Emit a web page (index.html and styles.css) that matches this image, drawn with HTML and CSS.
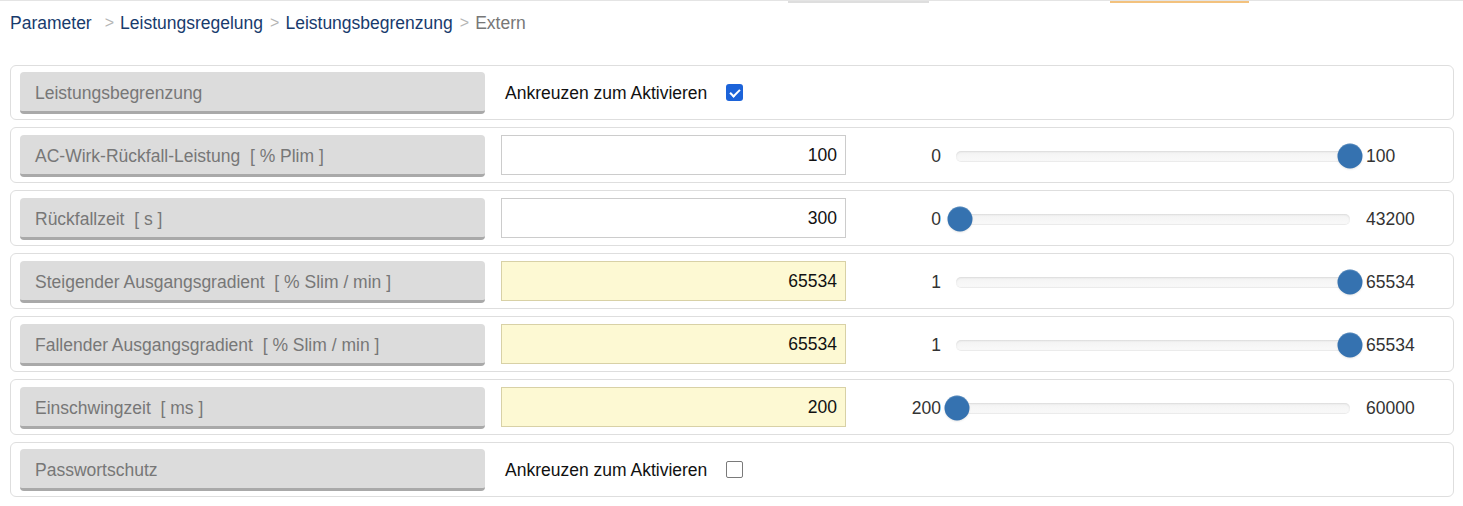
FILE: index.html
```html
<!DOCTYPE html>
<html lang="de">
<head>
<meta charset="utf-8">
<title>Extern</title>
<link rel="stylesheet" href="styles.css">
</head>
<body>
<div class="topbar">
  <span class="tb-gap1"></span><span class="tb-gray"></span><span class="tb-gap2"></span><span class="tb-orange"></span><span class="tb-rest"></span>
</div>
<nav class="crumbs">
  <a class="crumb first">Parameter</a><span class="sep">&gt;</span><a class="crumb">Leistungsregelung</a><span class="sep">&gt;</span><a class="crumb">Leistungsbegrenzung</a><span class="sep">&gt;</span><span class="crumb current">Extern</span>
</nav>
<main class="rows">
  <div class="row row-check">
    <div class="label">Leistungsbegrenzung</div>
    <label class="check"><span>Ankreuzen zum Aktivieren</span><input type="checkbox" class="box" checked></label>
  </div>
  <div class="row">
    <div class="label">AC-Wirk-Rückfall-Leistung&nbsp; [ % Plim ]</div>
    <input class="value" type="text" value="100">
    <div class="slider"><span class="min">0</span><div class="track"><div class="rail"><span class="thumb" style="left:100%"></span></div></div><span class="max">100</span></div>
  </div>
  <div class="row">
    <div class="label">Rückfallzeit&nbsp; [ s ]</div>
    <input class="value" type="text" value="300">
    <div class="slider"><span class="min">0</span><div class="track"><div class="rail"><span class="thumb" style="left:0.69%"></span></div></div><span class="max">43200</span></div>
  </div>
  <div class="row">
    <div class="label">Steigender Ausgangsgradient&nbsp; [ % Slim / min ]</div>
    <input class="value changed" type="text" value="65534">
    <div class="slider"><span class="min">1</span><div class="track"><div class="rail"><span class="thumb" style="left:100%"></span></div></div><span class="max">65534</span></div>
  </div>
  <div class="row">
    <div class="label">Fallender Ausgangsgradient&nbsp; [ % Slim / min ]</div>
    <input class="value changed" type="text" value="65534">
    <div class="slider"><span class="min">1</span><div class="track"><div class="rail"><span class="thumb" style="left:100%"></span></div></div><span class="max">65534</span></div>
  </div>
  <div class="row">
    <div class="label">Einschwingzeit&nbsp; [ ms ]</div>
    <input class="value changed" type="text" value="200">
    <div class="slider"><span class="min">200</span><div class="track"><div class="rail"><span class="thumb" style="left:0%"></span></div></div><span class="max">60000</span></div>
  </div>
  <div class="row row-check">
    <div class="label">Passwortschutz</div>
    <label class="check"><span>Ankreuzen zum Aktivieren</span><input type="checkbox" class="box"></label>
  </div>
</main>
</body>
</html>
```

FILE: styles.css
```css
* { box-sizing: border-box; }

html, body {
  margin: 0;
  padding: 0;
  background: #ffffff;
}

body {
  font-family: "Liberation Sans", Arial, sans-serif;
  font-size: 17.5px;
  color: #333333;
  width: 1463px;
  height: 506px;
  overflow: hidden;
}

/* thin top strip (tab underlines of a cut-off navigation) */
.topbar {
  display: flex;
  height: 3px;
  border-top: 1px solid #e4e4e4;
}
.topbar span { display: block; height: 2px; }
.tb-gap1 { width: 788px; }
.tb-gray { width: 141px; background: #dedede; }
.tb-gap2 { width: 181px; }
.tb-orange { width: 139px; background: #f3c27e; }
.tb-rest { flex: 1; }

.crumbs {
  display: flex;
  align-items: center;
  height: 20px;
  line-height: 20px;
  margin: 10px 0 0 10px;
  white-space: nowrap;
}
.crumb { color: #183b6d; text-decoration: none; }
.crumb.first { margin-right: 6px; }
.crumb.current { color: #777777; }
.sep {
  color: #b5b5b5;
  margin: 0 6px 0 7px;
  font-size: 16px;
}

.rows {
  display: flex;
  flex-direction: column;
  gap: 7px;
  margin: 32px 9px 0 10px;
}

.row {
  display: flex;
  align-items: center;
  gap: 16px;
  border: 1px solid #dedede;
  border-radius: 6px;
  padding: 7px 9px 5px 9px;
}
.row-check { padding: 6px 9px 5px 9px; }

.label {
  width: 465px;
  height: 42px;
  flex: none;
  display: flex;
  align-items: center;
  padding: 4px 15px 0 15px;
  background: #dcdcdc;
  border-bottom: 3px solid #a9a9a9;
  border-radius: 4px;
  color: #777777;
  white-space: nowrap;
}

.check {
  display: flex;
  align-items: center;
  gap: 19px;
  padding-left: 4px;
  color: #111111;
}

.box {
  appearance: none;
  -webkit-appearance: none;
  margin: 0 0 1px 0;
  width: 17px;
  height: 17px;
  border: 1.5px solid #7a7a7a;
  border-radius: 2px;
  background: #ffffff;
  position: relative;
}
.box:checked {
  border: none;
  border-radius: 3px;
  background: #1c63d9;
}
.box:checked::after {
  content: "";
  position: absolute;
  left: 6px;
  top: 3px;
  width: 4px;
  height: 8px;
  border-right: 2px solid #ffffff;
  border-bottom: 2px solid #ffffff;
  transform: rotate(45deg);
}

.value {
  width: 345px;
  height: 40px;
  flex: none;
  margin: 0 0 2px 0;
  padding: 0 8px;
  border: 1px solid #cccccc;
  background: #ffffff;
  font-family: "Liberation Sans", Arial, sans-serif;
  font-size: 17.5px;
  color: #111111;
  text-align: right;
  outline: none;
}
.value.changed {
  background: #fdf9d3;
  border-color: #d8d1a6;
}

.slider {
  display: flex;
  align-items: center;
  margin-left: -16px;
}
.min {
  width: 95px;
  text-align: right;
  color: #333333;
}
.max {
  margin-left: 16px;
  color: #333333;
}
.track {
  width: 394px;
  height: 10px;
  margin-left: 15px;
  border-radius: 5px;
  background: linear-gradient(#f3f3f3, #f9f9f9);
  box-shadow: inset 0 1px 2px rgba(0, 0, 0, 0.1), 0 1px 0 rgba(0, 0, 0, 0.08);
  padding-left: 1px;
}
.rail {
  position: relative;
  height: 100%;
}
.thumb {
  position: absolute;
  top: 50%;
  width: 25px;
  height: 25px;
  border-radius: 50%;
  background: #3572b0;
  box-shadow: inset 0 1px 0 rgba(255, 255, 255, 0.15), 0 1px 2px rgba(0, 0, 0, 0.1);
  transform: translate(-50%, -50%);
}
```
